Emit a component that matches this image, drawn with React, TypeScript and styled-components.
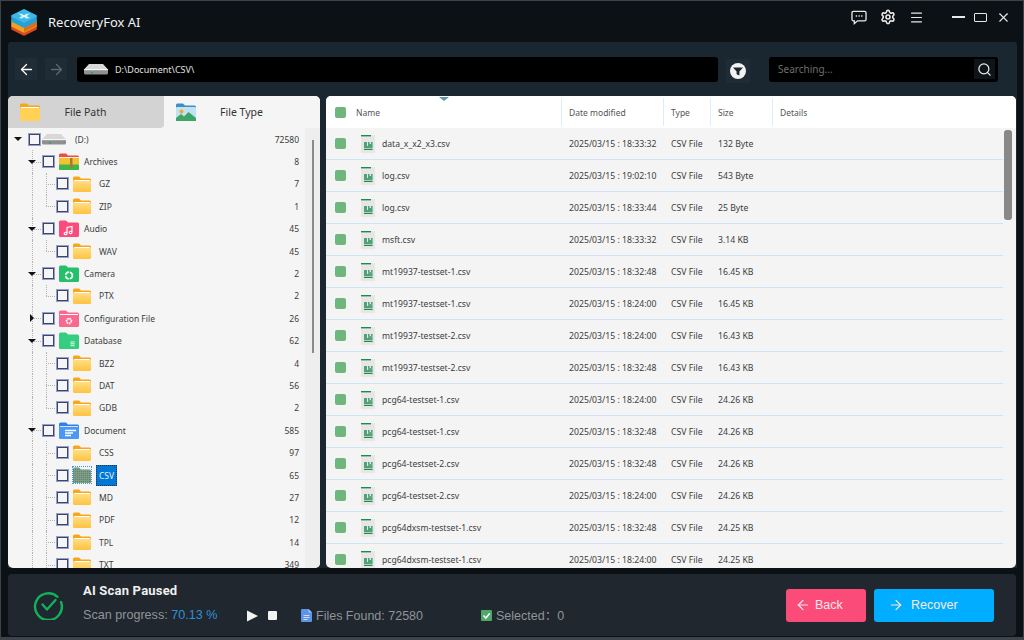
import styled, {createGlobalStyle} from 'styled-components';
import {ArrowLeft, ArrowRight, Menu, Search, Settings, X} from 'lucide-react';

const GlobalStyle = createGlobalStyle`
  html, body {
    margin: 0;
    padding: 0;
    background: #0c1115;
    overflow: hidden;
  }
  * {
    box-sizing: border-box;
  }
`;

const Frame = styled.div`
  width: 1024px;
  height: 640px;
  display: flex;
  flex-direction: column;
  background: #0c1115;
  border: 1px solid #3b444c;
  border-bottom-width: 3px;
  font-family: "Noto Sans", "Noto Sans CJK SC", sans-serif;
  overflow: hidden;
`;

const TitleBar = styled.div`
  height: 41px;
  flex: none;
  display: flex;
  align-items: center;
  padding: 0 12px 0 9px;
  color: #fff;
`;

const AppName = styled.div`
  margin-left: 10px;
  font-size: 13px;
  color: #f0f2f3;
  flex: 1;
`;

const TitleIcons = styled.div`
  display: flex;
  align-items: center;
  gap: 13px;
  margin-right: 28px;
  color: #e8e8e8;
  margin-top: -9px;
`;

const WindowIcons = styled.div`
  display: flex;
  align-items: center;
  gap: 9px;
  color: #e8e8e8;
  margin-top: -9px;
`;

const MinimizeMark = styled.span`
  width: 13px;
  height: 2px;
  background: #e8e8e8;
`;

const MaximizeMark = styled.span`
  width: 13px;
  height: 9px;
  border: 1.5px solid #e8e8e8;
  border-radius: 1px;
`;

const Workspace = styled.div`
  margin: 0 6px 0 7px;
  height: 526px;
  flex: none;
  display: flex;
  flex-direction: column;
  background: #1a2630;
  border-radius: 3px 3px 0 0;
`;

const Toolbar = styled.div`
  height: 54px;
  flex: none;
  display: flex;
  align-items: center;
  padding: 0 18px 0 7px;
`;

const NavButton = styled.div<{ $dim?: boolean }>`
  width: 22px;
  height: 22px;
  display: flex;
  align-items: center;
  justify-content: center;
  margin-right: 8px;
  background: #1f2b35;
  color: ${props => props.$dim ? '#5d676f' : '#fff'};
`;

const AddressBar = styled.div`
  width: 641px;
  height: 25px;
  margin-left: 2px;
  display: flex;
  align-items: center;
  padding-left: 7px;
  background: #000;
  border-radius: 3px;
  color: #e2e2e2;
  font-size: 9px;
`;

const AddressText = styled.span`
  margin-left: 7px;
`;

const FilterButton = styled.div`
  width: 24px;
  height: 24px;
  margin: 3px 19px 0 8px;
  display: flex;
  align-items: center;
  justify-content: center;
  background: #1f2b35;
`;

const SearchBox = styled.div`
  width: 229px;
  height: 25px;
  display: flex;
  align-items: center;
  justify-content: space-between;
  padding: 0 3px 0 9px;
  background: #000;
  border-radius: 3px;
  color: #6e6e6e;
  font-size: 10px;
`;

const SearchButton = styled.div`
  width: 21px;
  height: 20px;
  display: flex;
  align-items: center;
  justify-content: center;
  background: #0e1418;
  color: #eee;
`;

const Panels = styled.div`
  flex: 1;
  min-height: 0;
  display: flex;
  gap: 6px;
`;

const LeftPanel = styled.div`
  width: 312px;
  height: 472px;
  display: flex;
  flex-direction: column;
  background: #f5f5f5;
  border-radius: 5px;
  overflow: hidden;
`;

const Tabs = styled.div`
  height: 32px;
  flex: none;
  display: flex;
`;

const Tab = styled.div<{ $active?: boolean }>`
  width: 156px;
  display: flex;
  align-items: center;
  padding-left: 12px;
  background: ${props => props.$active ? '#d3d3d3' : '#f5f5f5'};
  border-radius: ${props => props.$active ? '0 0 4px 0' : '0'};
  color: #333;
  font-size: 10.5px;
`;

const TabLabel = styled.span`
  flex: 1;
  text-align: center;
  padding-right: 33px;
`;

const TreeArea = styled.div`
  flex: 1;
  min-height: 0;
  display: flex;
`;

const TreeList = styled.div`
  flex: 1;
  overflow: hidden;
`;

const TreeTrack = styled.div`
  width: 15px;
  flex: none;
  display: flex;
  justify-content: center;
  background: #eeeeee;
  padding-top: 12px;
`;

const TreeThumb = styled.div`
  width: 2px;
  height: 213px;
  background: #8a8a8a;
`;

const TreeItem = styled.div<{ $level: number }>`
  position: relative;
  height: 22.4px;
  display: flex;
  align-items: center;
  padding: 0 6px 0 ${props => 6 + props.$level * 14}px;
  font-size: 8.5px;
  color: #3c3c3c;
`;

const GuideV = styled.span<{ $x: number, $half?: boolean }>`
  position: absolute;
  left: ${props => props.$x}px;
  top: 0;
  height: ${props => props.$half ? '50%' : '100%'};
  border-left: 1px dotted #b4b4b4;
`;

const GuideH = styled.span<{ $x: number }>`
  position: absolute;
  left: ${props => props.$x}px;
  top: 50%;
  width: 9px;
  border-top: 1px dotted #b4b4b4;
`;

const ArrowSlot = styled.span`
  position: relative;
  width: 8px;
  height: 8px;
  flex: none;
  display: flex;
  align-items: center;
  justify-content: center;
`;

const ArrowOpen = styled.span`
  border-style: solid;
  border-width: 4px 4px 0 4px;
  border-color: #111 transparent transparent transparent;
`;

const ArrowClosed = styled.span`
  border-style: solid;
  border-width: 4px 0 4px 4px;
  border-color: transparent transparent transparent #111;
`;

const TreeCheck = styled.span`
  position: relative;
  width: 11px;
  height: 11px;
  flex: none;
  margin-left: 7px;
  background: #f5f5f5;
  border: 1px solid #3a4577;
  outline: 0.5px solid #9aa0bd;
`;

const IconSlot = styled.span<{ $level: number }>`
  flex: none;
  display: flex;
  align-items: center;
  justify-content: flex-start;
  margin-left: ${props => props.$level === 0 ? 2 : 5}px;
  width: ${props => [33, 25, 26][props.$level]}px;
`;

const SelectedIcon = styled.span`
  display: flex;
  outline: 1px dotted #3b9be8;
`;

const ItemName = styled.span`
  position: relative;
  flex: 1;
  white-space: nowrap;
  color: #3c3c3c;
`;

const SelectedName = styled.span`
  display: inline-block;
  line-height: 21px;
  padding: 0 3px;
  margin-left: -3px;
  background: #0078d7;
  color: #e8f2fb;
  outline: 1px dotted #333;
  outline-offset: -1px;
`;

const ItemCount = styled.span`
  position: relative;
  flex: none;
  color: #3c3c3c;
`;

const RightPanel = styled.div`
  position: relative;
  width: 690px;
  height: 472px;
  display: flex;
  flex-direction: column;
  background: #f4f4f4;
  border-radius: 5px;
  overflow: hidden;
`;

const COLUMNS = '236px 102px 47px 62px 1fr';

const TableHeader = styled.div`
  position: relative;
  height: 32px;
  flex: none;
  display: grid;
  grid-template-columns: ${COLUMNS};
  background: #fff;
  color: #555;
  font-size: 8.5px;
`;

const SortMark = styled.span`
  position: absolute;
  left: 113px;
  top: 1px;
  border-style: solid;
  border-width: 4px 5px 0 5px;
  border-color: #5d98a4 transparent transparent transparent;
`;

const HeaderCell = styled.div<{ $first?: boolean, $plain?: boolean }>`
  display: flex;
  align-items: center;
  gap: 10px;
  padding-left: ${props => props.$first ? '9px' : '7px'};
  border-right: ${props => props.$plain ? 'none' : '1px solid #dcecf8'};
  margin: 2px 0;
`;

const GreenCheck = styled.span`
  width: 11px;
  height: 11px;
  flex: none;
  background: #6fb67d;
  border-radius: 2px;
`;

const TableBody = styled.div`
  flex: 1;
  min-height: 0;
  overflow: hidden;
  padding-right: 13px;
`;

const TableRow = styled.div`
  height: 32px;
  display: grid;
  grid-template-columns: ${COLUMNS};
  align-items: center;
  border-bottom: 1px solid #cfe2f6;
  color: #3c3c3c;
  font-size: 8.7px;
`;

const NameCell = styled.div`
  display: flex;
  align-items: center;
  padding-left: 9px;
  font-size: 8.6px;
`;

const FileIconSlot = styled.span`
  display: flex;
  margin-left: 15px;
  margin-right: 7px;
`;

const Cell = styled.div`
  padding-left: 7px;
  white-space: nowrap;
`;

const TableThumb = styled.div`
  position: absolute;
  right: 4px;
  top: 34px;
  width: 8px;
  height: 90px;
  background: #888;
  border-radius: 3px;
`;

const StatusBar = styled.div`
  margin: 6px 7px 0 7px;
  height: 62px;
  flex: none;
  display: flex;
  align-items: center;
  background: #20272e;
  border-radius: 4px;
  padding: 0 22px 0 25px;
`;

const StatusText = styled.div`
  width: 164px;
  margin-left: 20px;
  display: flex;
  flex-direction: column;
  gap: 10px;
  padding-bottom: 6px;
`;

const StatusTitle = styled.div`
  font-family: Roboto, sans-serif;
  font-weight: 700;
  font-size: 13px;
  letter-spacing: 0.2px;
  color: #f0f0f0;
`;

const StatusLine = styled.div`
  font-family: "Liberation Sans", sans-serif;
  font-size: 12.6px;
  color: #8e959b;
  white-space: nowrap;
`;

const Percent = styled.span`
  color: #2f90d8;
`;

const StatusGroup = styled.div<{ $width?: number }>`
  display: flex;
  align-items: center;
  margin-top: 21px;
  height: 16px;
  line-height: 14px;
  ${props => props.$width ? `width: ${props.$width}px;` : ''}
  font-family: "Liberation Sans", "Noto Sans CJK SC", sans-serif;
  font-size: 12.5px;
  color: #8e959b;
  white-space: nowrap;
`;

const StopMark = styled.span`
  width: 9px;
  height: 9px;
  margin-left: 10px;
  background: #f2f2f2;
  border-radius: 1px;
`;

const StatIcon = styled.span`
  display: flex;
  margin-right: 4px;
`;

const Buttons = styled.div`
  margin-left: auto;
  display: flex;
  gap: 8px;
`;

const ActionButton = styled.div<{ $tone: string, $width: number }>`
  width: ${props => props.$width}px;
  height: 33px;
  display: flex;
  align-items: center;
  padding-left: ${props => props.$tone === 'blue' ? 14 : 9}px;
  gap: ${props => props.$tone === 'blue' ? 7 : 4}px;
  background: ${props => props.$tone === 'blue' ? '#00adff' : '#fb4b78'};
  border-radius: 3px;
  color: #fde9ef;
  font-family: "Liberation Sans", sans-serif;
  font-size: 12.5px;
`;

const Logo = () => (
  <svg width="28" height="28" viewBox="0 0 28 28" strokeLinejoin="round">
    <path d="M2 18 L14 11.5 L26 18 L26 21 L14 27 L2 21 Z" fill="#d9481f" stroke="#d9481f" strokeWidth="1.5" />
    <path d="M2 13 L14 7 L26 13 L26 18 L14 24 L2 18 Z" fill="#f0a31c" stroke="#f0a31c" strokeWidth="1.5" />
    <path d="M14 24 L26 18 L26 13 L14 19 Z" fill="#d9701f" />
    <path d="M2 8 L14 2 L26 8 L26 13 L14 19 L2 13 Z" fill="#2a9fd6" stroke="#2a9fd6" strokeWidth="1.5" />
    <path d="M2 8 L14 2 L26 8 L14 14 Z" fill="#3cb9e6" stroke="#3cb9e6" strokeWidth="1.5" />
    <path d="M8 5.5 L12 8 L9 10 L12 10.5 L14 9 L16 10.5 L20 10 L16.5 8 L20 5.5 L16 6 L14 7.2 L12 6 Z" fill="#dcf3fb" />
  </svg>
);

const ChatIcon = () => (
  <svg width="16" height="15" viewBox="0 0 17 16" fill="none" stroke="#e8e8e8" strokeWidth="1.4">
    <path d="M2.5 1.5 H14.5 A1.5 1.5 0 0 1 16 3 V10 A1.5 1.5 0 0 1 14.5 11.5 H7 L3.5 14.5 V11.5 H2.5 A1.5 1.5 0 0 1 1 10 V3 A1.5 1.5 0 0 1 2.5 1.5 Z" />
    <path d="M5 6.5 H6.4 M7.9 6.5 H9.3 M10.8 6.5 H12.2" strokeWidth="1.6" />
  </svg>
);

const FilterIcon = () => (
  <svg width="16" height="16" viewBox="0 0 16 16">
    <circle cx="8" cy="8" r="8" fill="#f2f2f2" />
    <path d="M3 4.5 H13 L9.4 8.6 V12.6 L6.6 11.2 V8.6 Z" fill="#1a2630" />
  </svg>
);

const Drive = () => (
  <svg width="24" height="13" viewBox="0 0 24 13">
    <path d="M0 6.5 L5 1 H19 L24 6.5 Z" fill="#d8d8d8" />
    <path d="M0 6 H24 V10 A1.5 1.5 0 0 1 22.5 11.5 H1.5 A1.5 1.5 0 0 1 0 10 Z" fill="#8f8f8f" />
    <rect x="0" y="6" width="24" height="1.2" fill="#f6f6f6" />
    <rect x="7" y="9" width="2" height="1.5" fill="#27a64a" />
  </svg>
);

type FolderKind = 'plain' | 'zip' | 'audio' | 'camera' | 'config' | 'database' | 'document';

const Folder = ({kind}: { kind: FolderKind }) => {
  if (kind === 'plain') {
    return (
      <svg width="18" height="16" viewBox="0 0 18 16">
        <defs>
          <linearGradient id="plainBody" x1="0" y1="0" x2="0" y2="1">
            <stop offset="0" stopColor="#ffe08c" />
            <stop offset="1" stopColor="#ffc23e" />
          </linearGradient>
        </defs>
        <path d="M0 2 A1.5 1.5 0 0 1 1.5 0.5 H6 L8 2.5 H16.5 A1.5 1.5 0 0 1 18 4 V8 H0 Z" fill="#f9a51a" />
        <rect x="0" y="4" width="18" height="12" rx="1.5" fill="url(#plainBody)" />
        <rect x="1.5" y="4" width="15" height="1" fill="#fff" />
      </svg>
    );
  }
  const colours: Record<string, string> = {
    zip: '#f1c232',
    audio: '#fa4b7c',
    camera: '#26bf6c',
    config: '#f8688f',
    database: '#35cd80',
    document: '#4a98f5',
  };
  const colour = colours[kind];
  return (
    <svg width="20" height="17" viewBox="0 0 20 17">
      <path d="M0 2 A1.5 1.5 0 0 1 1.5 0.5 H7 L9 2.5 H18.5 A1.5 1.5 0 0 1 20 4 V8 H0 Z" fill={kind === 'zip' ? '#ef4b4b' : kind === 'document' ? '#2f7fe8' : colour} />
      <rect x="0" y="4" width="20" height="13" rx="1.5" fill={colour} />
      {kind === 'zip' && <rect x="0" y="11.5" width="20" height="5.5" rx="1" fill="#3fb54a" />}
      {kind === 'zip' && <rect x="0" y="4" width="20" height="1" fill="#fff" opacity="0.8" />}
      {kind === 'zip' && <rect x="11" y="5" width="2.5" height="10" fill="#a9772f" />}
      {kind === 'audio' && <path d="M8 13.5 V7.5 L13 6.5 V12.5 M8 13.5 A1.4 1.2 0 1 1 8 13.4 M13 12.5 A1.4 1.2 0 1 1 13 12.4" stroke="#fff" strokeWidth="1.2" fill="none" />}
      {kind === 'camera' && <circle cx="10" cy="10.5" r="3.4" fill="none" stroke="#fff" strokeWidth="1.6" strokeDasharray="4.5 1" />}
      {kind === 'config' && <rect x="1" y="4" width="18" height="1" fill="#fff" />}
      {kind === 'config' && <circle cx="10" cy="11" r="2.4" fill="none" stroke="#fff" strokeWidth="1.8" strokeDasharray="1.5 0.6" />}
      {kind === 'database' && <path d="M11 9 H16 V14.5 H11 Z M11 10.8 H16 M11 12.6 H16" fill="#c9f5dd" stroke={colour} strokeWidth="0.7" />}
      {kind === 'document' && <rect x="1" y="4" width="18" height="1" fill="#cfe4ff" />}
      {kind === 'document' && <path d="M6 8.5 H17 M6 11 H14 M6 13.5 H12" stroke="#fff" strokeWidth="1.4" />}
    </svg>
  );
};

const DitheredFolder = () => (
  <svg width="18" height="16" viewBox="0 0 18 16">
    <defs>
      <pattern id="dither" width="2" height="2" patternUnits="userSpaceOnUse">
        <rect width="2" height="2" fill="#7f9a72" />
        <rect width="1" height="1" fill="#4b88a8" />
        <rect x="1" y="1" width="1" height="1" fill="#8f9f73" />
      </pattern>
    </defs>
    <path d="M0 2 A1.5 1.5 0 0 1 1.5 0.5 H6 L8 2.5 H16.5 A1.5 1.5 0 0 1 18 4 V16 H0 Z" fill="url(#dither)" />
  </svg>
);

const FilePathIcon = () => (
  <svg width="20" height="18" viewBox="0 0 20 18">
    <path d="M0 2 A1.5 1.5 0 0 1 1.5 0.5 H7 L9 2.5 H18.5 A1.5 1.5 0 0 1 20 4 V8 H0 Z" fill="#f9a51a" />
    <rect x="0" y="4" width="20" height="14" rx="1.5" fill="#ffd257" />
    <rect x="1" y="4" width="18" height="1" fill="#fff" />
  </svg>
);

const FileTypeIcon = () => (
  <svg width="20" height="18" viewBox="0 0 20 18">
    <path d="M0 2 A1.5 1.5 0 0 1 1.5 0.5 H7 L9 2.5 H18.5 A1.5 1.5 0 0 1 20 4 V8 H0 Z" fill="#3e8dc4" />
    <rect x="0" y="4" width="20" height="14" rx="1" fill="#bfe3f5" />
    <circle cx="5.5" cy="8.5" r="2" fill="#f6a821" />
    <path d="M0 18 V15 L5 11 L8 13.5 L12.5 9 L20 15 V18 Z" fill="#3fa565" />
  </svg>
);

const CsvIcon = () => (
  <svg width="14" height="18" viewBox="0 0 14 18">
    <rect x="0" y="0" width="14" height="18" fill="#e6e6e6" />
    <rect x="0" y="0" width="10" height="1.4" fill="#1f8a50" />
    <path d="M3 8 H6 M3 10 H6 M7 8 H8.6 M10 8 H11.6 M3 12 H11.6 M3 14.4 H11.6" stroke="#1f8a50" strokeWidth="1.3" />
    <path d="M7 10 H11.6" stroke="#1f8a50" strokeWidth="1.3" />
  </svg>
);

const ScanDone = () => (
  <svg width="30" height="30" viewBox="0 0 30 30" fill="none" stroke="#12b15e" strokeWidth="2.4" strokeLinecap="round" strokeLinejoin="round">
    <path d="M24.5 6.8 A13.4 13.4 0 1 0 28 12" />
    <path d="M9.5 14.5 L14 19.5 L22.5 10" />
  </svg>
);

const PlayMark = () => (
  <svg width="11" height="12" viewBox="0 0 11 12">
    <path d="M0 0.5 L11 6 L0 11.5 Z" fill="#f2f2f2" />
  </svg>
);

const DocMark = () => (
  <svg width="11" height="13" viewBox="0 0 11 13">
    <path d="M1 0 H7.5 L11 3.5 V12 A1 1 0 0 1 10 13 H1 A1 1 0 0 1 0 12 V1 A1 1 0 0 1 1 0 Z" fill="#5d94e6" />
    <path d="M7.5 0 L11 3.5 H7.5 Z" fill="#a9c7f3" />
    <path d="M2.5 6.5 H8.5 M2.5 8.5 H8.5 M2.5 10.5 H6.5" stroke="#c9dcf8" strokeWidth="1" />
  </svg>
);

const CheckMark = () => (
  <svg width="11" height="11" viewBox="0 0 11 11">
    <rect width="11" height="11" rx="1" fill="#4fa769" />
    <path d="M2.5 5.5 L4.8 8 L8.8 3.2" stroke="#fff" strokeWidth="1.5" fill="none" />
  </svg>
);

type TreeNode = {
  name: string,
  count: number,
  level: number,
  kind?: FolderKind,
  open?: boolean,
  closed?: boolean,
  last?: boolean,
  selected?: boolean,
};

const TREE: TreeNode[] = [
  {name: '(D:)', count: 72580, level: 0, open: true},
  {name: 'Archives', count: 8, level: 1, kind: 'zip', open: true},
  {name: 'GZ', count: 7, level: 2},
  {name: 'ZIP', count: 1, level: 2, last: true},
  {name: 'Audio', count: 45, level: 1, kind: 'audio', open: true},
  {name: 'WAV', count: 45, level: 2, last: true},
  {name: 'Camera', count: 2, level: 1, kind: 'camera', open: true},
  {name: 'PTX', count: 2, level: 2, last: true},
  {name: 'Configuration File', count: 26, level: 1, kind: 'config', closed: true},
  {name: 'Database', count: 62, level: 1, kind: 'database', open: true},
  {name: 'BZ2', count: 4, level: 2},
  {name: 'DAT', count: 56, level: 2},
  {name: 'GDB', count: 2, level: 2, last: true},
  {name: 'Document', count: 585, level: 1, kind: 'document', open: true},
  {name: 'CSS', count: 97, level: 2},
  {name: 'CSV', count: 65, level: 2, selected: true},
  {name: 'MD', count: 27, level: 2},
  {name: 'PDF', count: 12, level: 2},
  {name: 'TPL', count: 14, level: 2},
  {name: 'TXT', count: 349, level: 2},
];

const FILES: [string, string, string][] = [
  ['data_x_x2_x3.csv', '18:33:32', '132 Byte'],
  ['log.csv', '19:02:10', '543 Byte'],
  ['log.csv', '18:33:44', '25 Byte'],
  ['msft.csv', '18:33:32', '3.14 KB'],
  ['mt19937-testset-1.csv', '18:32:48', '16.45 KB'],
  ['mt19937-testset-1.csv', '18:24:00', '16.45 KB'],
  ['mt19937-testset-2.csv', '18:24:00', '16.43 KB'],
  ['mt19937-testset-2.csv', '18:32:48', '16.43 KB'],
  ['pcg64-testset-1.csv', '18:24:00', '24.26 KB'],
  ['pcg64-testset-1.csv', '18:32:48', '24.26 KB'],
  ['pcg64-testset-2.csv', '18:32:48', '24.26 KB'],
  ['pcg64-testset-2.csv', '18:24:00', '24.26 KB'],
  ['pcg64dxsm-testset-1.csv', '18:32:48', '24.25 KB'],
  ['pcg64dxsm-testset-1.csv', '18:24:00', '24.25 KB'],
];

const treeIcon = (node: TreeNode) => {
  if (node.level === 0) return <Drive />;
  if (node.selected) return <SelectedIcon><DitheredFolder /></SelectedIcon>;
  return <Folder kind={node.kind ?? 'plain'} />;
};

export default function App() {
  return (
    <Frame>
      <GlobalStyle />
      <TitleBar>
        <Logo />
        <AppName>RecoveryFox AI</AppName>
        <TitleIcons>
          <ChatIcon />
          <Settings size={16} strokeWidth={2.4} />
          <Menu size={15} strokeWidth={1.7} />
        </TitleIcons>
        <WindowIcons>
          <MinimizeMark />
          <MaximizeMark />
          <X size={15} strokeWidth={1.7} />
        </WindowIcons>
      </TitleBar>
      <Workspace>
        <Toolbar>
          <NavButton><ArrowLeft size={17} strokeWidth={1.8} /></NavButton>
          <NavButton $dim><ArrowRight size={17} strokeWidth={1.8} /></NavButton>
          <AddressBar>
            <Drive />
            <AddressText>D:\Document\CSV\</AddressText>
          </AddressBar>
          <FilterButton><FilterIcon /></FilterButton>
          <SearchBox>
            Searching...
            <SearchButton><Search size={15} strokeWidth={2} /></SearchButton>
          </SearchBox>
        </Toolbar>
        <Panels>
          <LeftPanel>
            <Tabs>
              <Tab $active><FilePathIcon /><TabLabel>File Path</TabLabel></Tab>
              <Tab><FileTypeIcon /><TabLabel>File Type</TabLabel></Tab>
            </Tabs>
            <TreeArea>
              <TreeList>
                {TREE.map((node, index) => (
                  <TreeItem key={index} $level={node.level}>
                    {node.level > 0 && <GuideV $x={24} />}
                    {node.level === 1 && <GuideH $x={24} />}
                    {node.level === 2 && <GuideV $x={38} $half={node.last} />}
                    {node.level === 2 && <GuideH $x={38} />}
                    <ArrowSlot>
                      {node.open && <ArrowOpen />}
                      {node.closed && <ArrowClosed />}
                    </ArrowSlot>
                    <TreeCheck />
                    <IconSlot $level={node.level}>{treeIcon(node)}</IconSlot>
                    <ItemName>
                      {node.selected ? <SelectedName>{node.name}</SelectedName> : node.name}
                    </ItemName>
                    <ItemCount>{node.count}</ItemCount>
                  </TreeItem>
                ))}
              </TreeList>
              <TreeTrack><TreeThumb /></TreeTrack>
            </TreeArea>
          </LeftPanel>
          <RightPanel>
            <TableHeader>
              <SortMark />
              <HeaderCell $first><GreenCheck />Name</HeaderCell>
              <HeaderCell>Date modified</HeaderCell>
              <HeaderCell>Type</HeaderCell>
              <HeaderCell>Size</HeaderCell>
              <HeaderCell $plain>Details</HeaderCell>
            </TableHeader>
            <TableBody>
              {FILES.map(([name, time, size], index) => (
                <TableRow key={index}>
                  <NameCell>
                    <GreenCheck />
                    <FileIconSlot><CsvIcon /></FileIconSlot>
                    {name}
                  </NameCell>
                  <Cell>2025/03/15 : {time}</Cell>
                  <Cell>CSV File</Cell>
                  <Cell>{size}</Cell>
                  <Cell />
                </TableRow>
              ))}
            </TableBody>
            <TableThumb />
          </RightPanel>
        </Panels>
      </Workspace>
      <StatusBar>
        <ScanDone />
        <StatusText>
          <StatusTitle>AI Scan Paused</StatusTitle>
          <StatusLine>Scan progress: <Percent>70.13 %</Percent></StatusLine>
        </StatusText>
        <StatusGroup $width={54}>
          <PlayMark />
          <StopMark />
        </StatusGroup>
        <StatusGroup $width={180}>
          <StatIcon><DocMark /></StatIcon>
          Files Found: 72580
        </StatusGroup>
        <StatusGroup>
          <StatIcon><CheckMark /></StatIcon>
          Selected：0
        </StatusGroup>
        <Buttons>
          <ActionButton $tone="pink" $width={80}><ArrowLeft size={16} strokeWidth={1.8} />Back</ActionButton>
          <ActionButton $tone="blue" $width={120}><ArrowRight size={16} strokeWidth={1.8} />Recover</ActionButton>
        </Buttons>
      </StatusBar>
    </Frame>
  );
}
